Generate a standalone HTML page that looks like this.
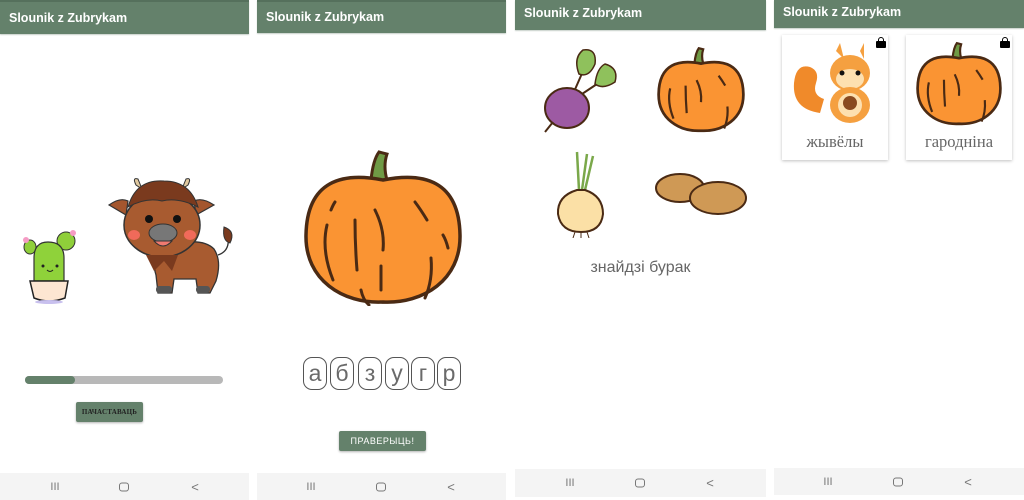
<!DOCTYPE html>
<html><head><meta charset="utf-8"><style>
*{margin:0;padding:0;box-sizing:border-box}
body{width:1024px;height:500px;background:#fff;position:relative;overflow:hidden;font-family:"Liberation Sans",sans-serif}
.a{position:absolute}
.hdr{position:absolute;top:0;background:#64816b;color:#fff;font-size:12.5px;font-weight:bold;padding-left:9px;border-top:2px solid #55705c;box-shadow:0 1px 1px #c8d0ca}
.nav{position:absolute;background:#f4f4f4}
.nav span{position:absolute;top:50%;transform:translate(-50%,-50%);color:#777;font-size:11px}
.home{width:10px;height:9px;border:1.3px solid #777;border-radius:3px}
.lt{position:absolute;width:24px;height:33px;border:1px solid #555;border-radius:9px;font-size:23px;color:#6a6a6a;text-align:center;line-height:30px}
.card{position:absolute;background:#fff;box-shadow:0 1px 3px rgba(0,0,0,.25);width:106px;height:125px;top:35px}
.card .t{position:absolute;bottom:8px;width:100%;text-align:center;font-family:"Liberation Serif",serif;font-size:16.5px;color:#666}
</style></head><body>

<!-- panel 1 -->
<div class="hdr" style="left:0;width:249px;height:34px;line-height:32px">Slounik z Zubrykam</div>
<svg class="a" style="left:18px;top:228px" width="72" height="78" viewBox="0 0 72 78">
<ellipse cx="12" cy="19" rx="6" ry="7" fill="#8fcf3a" stroke="#333" stroke-width="1"/>
<ellipse cx="48" cy="13" rx="9" ry="9" fill="#8fcf3a" stroke="#333" stroke-width="1"/>
<path d="M16 53 L16 30 Q16 14 30 14 Q46 14 46 30 L46 53Z" fill="#8fd23a" stroke="#333" stroke-width="1.2"/>
<circle cx="8" cy="12" r="3" fill="#f59bc4"/><circle cx="55" cy="5" r="3" fill="#f59bc4"/>
<circle cx="25" cy="38" r="1.5" fill="#222"/><circle cx="39" cy="38" r="1.5" fill="#222"/>
<path d="M29 42 Q32 45 35 42" stroke="#222" fill="none"/>
<path d="M12 53 H50 L47 70 Q31 76 16 70Z" fill="#fde6d2" stroke="#222" stroke-width="1.5"/>
<ellipse cx="31" cy="74" rx="14" ry="2" fill="#c8c0ee"/>
</svg>
<svg class="a" style="left:106px;top:175px" width="134" height="124" viewBox="0 0 134 124">
<path d="M30 10 Q26 2 32 4 L36 14Z M82 10 Q86 2 80 4 L76 14Z" fill="#e0c9a0" stroke="#333"/>
<path d="M3 30 Q14 22 22 26 L20 40Z M108 30 Q96 22 88 26 L90 40Z" fill="#a4562e" stroke="#333" stroke-width="1.2"/>
<path d="M66 70 Q96 62 108 74 Q116 86 110 106 L104 118 L92 118 L90 104 L68 104 L66 118 L52 118 L50 100 Q44 84 66 70Z" fill="#a85b30" stroke="#333" stroke-width="1.3"/>
<path d="M112 80 Q124 76 122 62" stroke="#333" fill="none" stroke-width="1.3"/>
<path d="M118 52 Q130 56 124 68 Q116 66 118 52Z" fill="#7a3a1e" stroke="#333"/>
<ellipse cx="56" cy="50" rx="38" ry="32" fill="#a85b30" stroke="#333" stroke-width="1.5"/>
<path d="M22 32 Q30 4 58 6 Q84 6 92 32 Q72 22 56 26 Q40 22 22 32Z" fill="#7a3a1e" stroke="#333"/>
<path d="M40 80 L48 96 L58 86 L66 96 L72 80Z" fill="#7a3a1e"/>
<circle cx="43" cy="44" r="4" fill="#111"/><circle cx="71" cy="44" r="4" fill="#111"/>
<ellipse cx="28" cy="60" rx="6" ry="5" fill="#f06a5a"/><ellipse cx="84" cy="60" rx="6" ry="5" fill="#f06a5a"/>
<ellipse cx="57" cy="58" rx="14" ry="9" fill="#777" stroke="#333"/>
<path d="M48 66 Q57 76 66 66Z" fill="#f07a70" stroke="#333"/>
<rect x="50" y="111" width="16" height="7" rx="3" fill="#555"/><rect x="90" y="111" width="14" height="7" rx="3" fill="#555"/>
</svg>
<div class="a" style="left:25px;top:376px;width:198px;height:8px;border-radius:4px;background:#b8b8b8"></div>
<div class="a" style="left:25px;top:376px;width:50px;height:8px;border-radius:4px;background:#64816b"></div>
<div class="a" style="left:76px;top:402px;width:67px;height:20px;background:#64816b;border-radius:2px;box-shadow:0 1px 2px rgba(0,0,0,.3);font-family:'Liberation Serif',serif;font-weight:bold;font-size:7px;color:#222;text-align:center;line-height:20px;letter-spacing:.2px;white-space:nowrap">ПАЧАСТАВАЦЬ</div>
<div class="nav" style="left:0;top:473px;width:249px;height:27px"><span style="left:55px">III</span><span style="left:124px" class="home"></span><span style="left:195px;font-size:13px">&lt;</span></div>

<!-- panel 2 -->
<div class="hdr" style="left:257px;width:249px;height:33px;line-height:31px">Slounik z Zubrykam</div>
<svg class="a" style="left:303px;top:150px" width="160" height="156" viewBox="0 0 160 156">
<path d="M68 30 Q70 10 76 2 L84 4 Q80 16 84 30Z" fill="#6f9a45" stroke="#4a2a14" stroke-width="3"/>
<path d="M80 30 C40 22 4 30 3 85 C2 130 40 154 80 152 C120 154 158 130 157 85 C156 30 120 22 80 30Z" fill="#fa9433" stroke="#4a2a14" stroke-width="3.5"/>
<g stroke="#4a2a14" stroke-width="3" fill="none" stroke-linecap="round">
<path d="M28 60 Q30 55 32 52"/><path d="M24 75 Q18 100 30 130"/><path d="M52 70 Q52 95 54 120"/><path d="M72 60 Q82 80 80 100"/><path d="M78 116 V140"/><path d="M112 52 Q118 60 124 70"/><path d="M140 85 Q143 90 145 98"/><path d="M128 108 Q130 130 122 148"/><path d="M58 140 Q60 150 66 155"/></g>
</svg>
<div class="lt" style="left:303px;top:357px">а</div>
<div class="lt" style="left:330px;top:357px">б</div>
<div class="lt" style="left:358px;top:357px">з</div>
<div class="lt" style="left:385px;top:357px">у</div>
<div class="lt" style="left:411px;top:357px">г</div>
<div class="lt" style="left:437px;top:357px">р</div>
<div class="a" style="left:339px;top:431px;width:87px;height:20px;background:#64816b;border-radius:2px;box-shadow:0 1px 2px rgba(0,0,0,.3);font-size:9px;color:#fff;text-align:center;line-height:20px;letter-spacing:.5px">ПРАВЕРЫЦЬ!</div>
<div class="nav" style="left:257px;top:473px;width:249px;height:27px"><span style="left:54px">III</span><span style="left:124px" class="home"></span><span style="left:194px;font-size:13px">&lt;</span></div>

<!-- panel 3 -->
<div class="hdr" style="left:515px;width:251px;height:30px;line-height:27px;border-top:0">Slounik z Zubrykam</div>
<svg class="a" style="left:543px;top:48px" width="76" height="86" viewBox="0 0 76 86">
<path d="M30 46 L44 14 M36 48 L66 28" stroke="#4a2a14" stroke-width="2"/>
<path d="M40 2 Q54 0 52 16 Q46 30 36 26 Q30 10 40 2Z M62 16 Q76 20 72 34 Q60 42 52 36 Q54 20 62 16Z" fill="#8fc15c" stroke="#4a2a14" stroke-width="1.5"/>
<ellipse cx="24" cy="60" rx="22" ry="20" fill="#9d5aa3" stroke="#4a2a14" stroke-width="2"/>
<path d="M10 74 L2 84" stroke="#4a2a14" stroke-width="2"/>
</svg>
<svg class="a" style="left:657px;top:47px" width="88" height="86" viewBox="0 0 160 156">
<path d="M68 30 Q70 10 76 2 L84 4 Q80 16 84 30Z" fill="#6f9a45" stroke="#4a2a14" stroke-width="4"/>
<path d="M80 30 C40 22 4 30 3 85 C2 130 40 154 80 152 C120 154 158 130 157 85 C156 30 120 22 80 30Z" fill="#fa9433" stroke="#4a2a14" stroke-width="5"/>
<g stroke="#4a2a14" stroke-width="4" fill="none"><path d="M24 75 Q18 100 30 130"/><path d="M52 70 Q52 95 54 120"/><path d="M72 60 Q82 80 80 100"/><path d="M112 52 Q118 60 124 70"/><path d="M128 108 Q130 130 122 148"/></g>
</svg>
<svg class="a" style="left:555px;top:150px" width="52" height="88" viewBox="0 0 52 88">
<path d="M24 40 L22 2 M27 40 L32 4 M30 40 L38 6" stroke="#7aa84a" stroke-width="2.5"/>
<path d="M22 40 Q2 46 3 64 Q6 82 26 82 Q46 82 48 64 Q48 46 30 40Z" fill="#fbe0a6" stroke="#4a2a14" stroke-width="2"/>
<path d="M20 82 L18 88 M26 82 V88 M32 82 L34 88" stroke="#4a2a14"/>
</svg>
<svg class="a" style="left:654px;top:170px" width="94" height="48" viewBox="0 0 94 48">
<ellipse cx="26" cy="18" rx="24" ry="14" fill="#cf9955" stroke="#4a2a14" stroke-width="2"/>
<ellipse cx="64" cy="28" rx="28" ry="16" fill="#cf9955" stroke="#4a2a14" stroke-width="2"/>
</svg>
<div class="a" style="left:515px;top:259px;width:251px;text-align:center;font-size:16px;color:#666">знайдзі бурак</div>
<div class="nav" style="left:515px;top:469px;width:251px;height:28px"><span style="left:55px">III</span><span style="left:125px" class="home"></span><span style="left:195px;font-size:13px">&lt;</span></div>

<!-- panel 4 -->
<div class="hdr" style="left:774px;width:250px;height:28px;line-height:25px;border-top:0">Slounik z Zubrykam</div>
<div class="card" style="left:782px">
<svg class="a" style="left:8px;top:8px" width="86" height="82" viewBox="0 0 86 82">
<path d="M30 70 Q2 66 4 40 Q6 20 20 24 Q30 28 26 40 Q22 52 34 56Z" fill="#f08a2a"/>
<path d="M46 8 L50 0 L54 16 Z M70 8 L74 0 L74 16Z" fill="#f5a040"/>
<ellipse cx="60" cy="30" rx="20" ry="18" fill="#f5a040"/>
<ellipse cx="60" cy="36" rx="14" ry="10" fill="#fde0b0"/>
<circle cx="52" cy="30" r="2.5" fill="#111"/><circle cx="68" cy="30" r="2.5" fill="#111"/>
<ellipse cx="60" cy="62" rx="20" ry="18" fill="#f5a040"/>
<ellipse cx="60" cy="62" rx="12" ry="12" fill="#fde0b0"/>
<ellipse cx="60" cy="60" rx="7" ry="7" fill="#8a4a20"/>
</svg>
<div class="a" style="right:2px;top:2px;width:10px;height:11px"><div class="a" style="left:2px;top:0;width:6px;height:6px;border:1.5px solid #000;border-radius:3px 3px 0 0"></div><div class="a" style="left:0;top:4px;width:10px;height:7px;background:#000;border-radius:1px"></div></div>
<div class="t">жывёлы</div></div>
<div class="card" style="left:906px">
<svg class="a" style="left:10px;top:6px" width="86" height="86" viewBox="0 0 160 156">
<path d="M68 30 Q70 10 76 2 L84 4 Q80 16 84 30Z" fill="#6f9a45" stroke="#4a2a14" stroke-width="4"/>
<path d="M80 30 C40 22 4 30 3 85 C2 130 40 154 80 152 C120 154 158 130 157 85 C156 30 120 22 80 30Z" fill="#fa9433" stroke="#4a2a14" stroke-width="5"/>
<g stroke="#4a2a14" stroke-width="4" fill="none"><path d="M24 75 Q18 100 30 130"/><path d="M52 70 Q52 95 54 120"/><path d="M72 60 Q82 80 80 100"/><path d="M112 52 Q118 60 124 70"/><path d="M128 108 Q130 130 122 148"/></g>
</svg>
<div class="a" style="right:2px;top:2px;width:10px;height:11px"><div class="a" style="left:2px;top:0;width:6px;height:6px;border:1.5px solid #000;border-radius:3px 3px 0 0"></div><div class="a" style="left:0;top:4px;width:10px;height:7px;background:#000;border-radius:1px"></div></div>
<div class="t">гароднiна</div></div>
<div class="nav" style="left:774px;top:468px;width:250px;height:27px"><span style="left:54px">III</span><span style="left:124px" class="home"></span><span style="left:194px;font-size:13px">&lt;</span></div>
</body></html>
